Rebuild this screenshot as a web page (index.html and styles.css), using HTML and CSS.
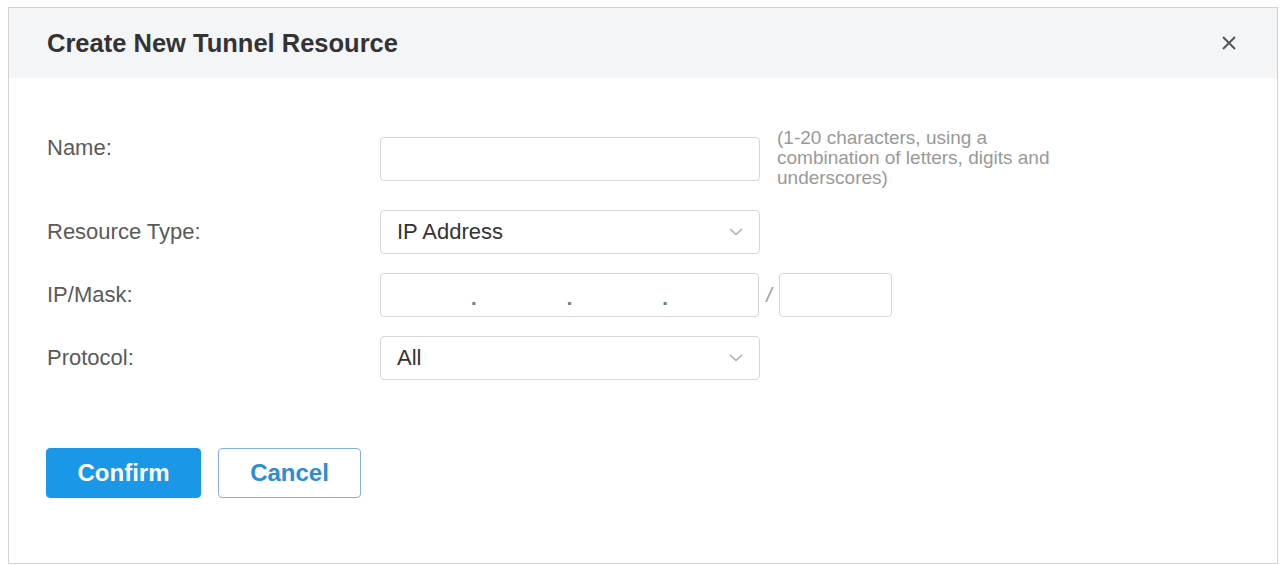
FILE: index.html
```html
<!DOCTYPE html>
<html lang="en">

<head>
    <meta charset="UTF-8">
    <meta name="viewport" content="width=device-width, initial-scale=1.0">
    <title>Create New Tunnel Resource</title>
    <link rel="stylesheet" href="styles.css">
</head>

<body>
    <div class="dialog">
        <div class="dialog-header">
            <h1 class="dialog-title">Create New Tunnel Resource</h1>
            <button class="close-btn" aria-label="Close">
                <svg width="16" height="16" viewBox="0 0 16 16">
                    <path d="M2 2 L14 14 M14 2 L2 14" stroke="#555" stroke-width="2" fill="none" />
                </svg>
            </button>
        </div>
        <div class="dialog-body">
            <div class="form-row name-row">
                <label class="label">Name:</label>
                <input class="field" type="text">
                <p class="hint">(1-20 characters, using a combination of letters, digits and underscores)</p>
            </div>
            <div class="form-row">
                <label class="label">Resource Type:</label>
                <div class="field select">
                    <span>IP Address</span>
                    <svg class="chevron" width="14" height="8" viewBox="0 0 14 8">
                        <path d="M1 1 L7 6.5 L13 1" stroke="#aaa" stroke-width="1.3" fill="none" />
                    </svg>
                </div>
            </div>
            <div class="form-row">
                <label class="label">IP/Mask:</label>
                <div class="field ip-field">
                    <span class="ip-part"></span>
                    <span class="ip-dot">.</span>
                    <span class="ip-part"></span>
                    <span class="ip-dot">.</span>
                    <span class="ip-part"></span>
                    <span class="ip-dot">.</span>
                    <span class="ip-part"></span>
                </div>
                <span class="slash">/</span>
                <input class="field mask-field" type="text">
            </div>
            <div class="form-row">
                <label class="label">Protocol:</label>
                <div class="field select">
                    <span>All</span>
                    <svg class="chevron" width="14" height="8" viewBox="0 0 14 8">
                        <path d="M1 1 L7 6.5 L13 1" stroke="#aaa" stroke-width="1.3" fill="none" />
                    </svg>
                </div>
            </div>
            <div class="actions">
                <button class="btn btn-primary">Confirm</button>
                <button class="btn btn-default">Cancel</button>
            </div>
        </div>
    </div>
</body>

</html>
```

FILE: styles.css
```css
body {
    font-family: "Liberation Sans", Arial, sans-serif;
    background-color: #fff;
    margin: 0;
    padding: 0;
}

.dialog {
    box-sizing: border-box;
    width: 1270px;
    height: 557px;
    margin: 7px 0 0 8px;
    border: 1px solid #d2d2d2;
    background-color: #fff;
}

.dialog-header {
    height: 70px;
    padding: 0 38px;
    background-color: #f3f5f7;
    display: flex;
    align-items: center;
    justify-content: space-between;
}

.dialog-title {
    margin: 0;
    font-size: 25.5px;
    font-weight: bold;
    color: #333;
}

.close-btn {
    background: none;
    border: none;
    padding: 0;
    margin-right: 2px;
    display: flex;
    cursor: pointer;
}

.dialog-body {
    padding: 50px 38px 0 38px;
}

.form-row {
    display: flex;
    align-items: center;
    margin-bottom: 19px;
}

.name-row {
    margin-bottom: 22px;
}

.label {
    width: 333px;
    flex-shrink: 0;
    font-size: 22px;
    color: #5a5a5a;
}

.name-row .label {
    align-self: flex-start;
    margin-top: 7px;
}

.name-row .field {
    margin-top: 2px;
}

.field {
    box-sizing: border-box;
    width: 380px;
    height: 44px;
    border: 1px solid #d6d6d6;
    border-radius: 4px;
    background-color: #fff;
    font-family: inherit;
    font-size: 22px;
    color: #333;
    margin: 0;
}

.hint {
    margin: 0 0 0 17px;
    width: 300px;
    font-size: 19px;
    line-height: 20px;
    color: #999;
}

.select {
    display: flex;
    align-items: center;
    justify-content: space-between;
    padding: 0 16px 0 16px;
}

.ip-field {
    width: 379px;
    display: flex;
    align-items: center;
}

.ip-part {
    flex: 1;
}

.ip-dot {
    font-size: 20px;
    font-weight: bold;
    color: #777;
    padding-top: 6px;
}

.slash {
    width: 20px;
    text-align: center;
    font-size: 20px;
    font-style: italic;
    color: #999;
}

.mask-field {
    width: 113px;
}

.actions {
    display: flex;
    gap: 17px;
    margin-top: 68px;
    margin-left: -1px;
}

.btn {
    height: 50px;
    border-radius: 4px;
    font-family: inherit;
    font-size: 24px;
    font-weight: bold;
    cursor: pointer;
}

.btn-primary {
    width: 155px;
    background-color: #1a97e6;
    border: 1px solid #1a97e6;
    color: #fff;
}

.btn-default {
    width: 143px;
    background-color: #fff;
    border: 1px solid #7fb4d8;
    color: #2b8dd4;
}
```
